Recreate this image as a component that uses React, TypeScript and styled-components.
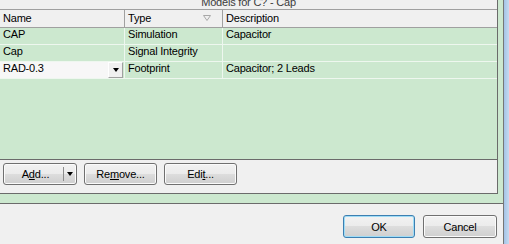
import React from 'react'
import styled, { createGlobalStyle } from 'styled-components'

const GlobalStyle = createGlobalStyle`
  html, body {
    margin: 0;
    padding: 0;
    background: #f0f0f0;
    overflow: hidden;
  }
  body {
    font-family: "Liberation Sans", Arial, sans-serif;
    font-size: 11px;
    letter-spacing: -0.2px;
    color: #000;
  }
`

const models = [
  { name: 'CAP', type: 'Simulation', desc: 'Capacitor' },
  { name: 'Cap', type: 'Signal Integrity', desc: '' },
  { name: 'RAD-0.3', type: 'Footprint', desc: 'Capacitor; 2 Leads', editing: true },
]

const Window = styled.div`
  display: flex;
  width: 509px;
  height: 244px;
`

const Dialog = styled.div`
  width: 503px;
  border-right: 1px solid #767676;
  display: flex;
  flex-direction: column;
`

const Frame = styled.div`
  flex: 1;
  background: linear-gradient(to right, #a4c3e6, #c6daf0);
`

const TopPanel = styled.div`
  height: 203px;
  background: #cce8cf;
  border-bottom: 1px solid #6b6b6b;
`

const Group = styled.div`
  width: 497px;
  height: 193px;
  background: #f0f0f0;
  border-right: 1px solid #6b6b6b;
  border-bottom: 1px solid #6b6b6b;
  display: flex;
  flex-direction: column;
`

const Title = styled.div`
  height: 9px;
  line-height: 5px;
  overflow: hidden;
  text-align: center;
  color: #3c3c3c;
  border-bottom: 1px solid #a0a0a0;
`

const Row = styled.div<{ $header?: boolean }>`
  display: flex;
  height: ${p => (p.$header ? 17 : 16)}px;
  line-height: ${p => (p.$header ? 17 : 13)}px;
  background: ${p => (p.$header ? '#f0f0f0' : '#cce8cf')};
  border-bottom: 1px solid ${p => (p.$header ? '#a0a0a0' : '#eef7ef')};
`

const Cell = styled.div<{ $w?: number; $header?: boolean }>`
  ${p => (p.$w ? `width: ${p.$w}px;` : 'flex: 1;')}
  display: flex;
  align-items: flex-start;
  padding-left: 3px;
  box-sizing: content-box;
  white-space: nowrap;
  overflow: hidden;
  border-right: ${p => (p.$w ? `1px solid ${p.$header ? '#a0a0a0' : '#eef7ef'}` : 'none')};
`

const SortMark = styled.svg`
  margin: 5px 11px 0 auto;
`

const Editor = styled.div`
  display: flex;
  width: 123px;
  height: 16px;
  margin-left: -3px;
`

const EditorText = styled.div`
  flex: 1;
  padding-left: 3px;
  background: #f7f7f7;
`

const DropBtn = styled.div`
  width: 13px;
  height: 14px;
  background: #f0f0f0;
  border-top: 1px solid #fff;
  border-left: 1px solid #fff;
  border-right: 1px solid #a0a0a0;
  border-bottom: 1px solid #a0a0a0;
  display: flex;
  align-items: center;
  justify-content: center;
`

const Arrow = styled.span`
  width: 0;
  height: 0;
  border-left: 3.5px solid transparent;
  border-right: 3.5px solid transparent;
  border-top: 4px solid #000;
`

const Empty = styled.div`
  flex: 1;
  background: #cce8cf;
`

const ButtonBar = styled.div`
  height: 30px;
  border-top: 1px solid #6b6b6b;
  display: flex;
  align-items: flex-start;
  gap: 7px;
  padding: 3px 0 0 3px;
`

const Btn = styled.button<{ $w: number; $h?: number; $primary?: boolean }>`
  width: ${p => p.$w}px;
  height: ${p => p.$h ?? 22}px;
  padding: 0;
  display: flex;
  align-items: center;
  justify-content: center;
  font: inherit;
  letter-spacing: inherit;
  color: #000;
  border: 1px solid ${p => (p.$primary ? '#3c7fb1' : '#707070')};
  border-radius: 3px;
  background: linear-gradient(#f2f2f2 0%, #ebebeb 50%, #dddddd 50%, #cfcfcf 100%);
  box-shadow: inset 0 0 0 1px ${p => (p.$primary ? '#9fdcf6' : '#fbfbfb')};
  u { text-decoration-thickness: 1px; text-underline-offset: 1px; }
`

const SplitLabel = styled.span`
  flex: 1;
  text-align: center;
  padding-left: 4px;
`

const SplitDivider = styled.span`
  width: 1px;
  height: 14px;
  background: #8c8c8c;
`

const SplitArrow = styled.span`
  width: 12px;
  display: flex;
  justify-content: center;
`

const Footer = styled.div`
  flex: 1;
  display: flex;
  justify-content: flex-end;
  align-items: flex-start;
  gap: 8px;
  padding: 11px 6px 0 0;
`

export default function App() {
  return (
    <Window>
      <GlobalStyle />
      <Dialog>
        <TopPanel>
          <Group>
            <Title>Models for C? - Cap</Title>
            <Row $header>
              <Cell $w={121} $header>Name</Cell>
              <Cell $w={94} $header>
                Type
                <SortMark width="8" height="6" viewBox="0 0 8 6">
                  <path d="M0.5 0.5 H7.5 L4 5.5 Z" fill="none" stroke="#a8a8a8" strokeWidth="1" />
                </SortMark>
              </Cell>
              <Cell $header>Description</Cell>
            </Row>
            {models.map(m => (
              <Row key={m.name}>
                <Cell $w={121}>
                  {m.editing ? (
                    <Editor>
                      <EditorText>{m.name}</EditorText>
                      <DropBtn><Arrow /></DropBtn>
                    </Editor>
                  ) : m.name}
                </Cell>
                <Cell $w={94}>{m.type}</Cell>
                <Cell>{m.desc}</Cell>
              </Row>
            ))}
            <Empty />
            <ButtonBar>
              <Btn $w={74}>
                <SplitLabel>A<u>d</u>d...</SplitLabel>
                <SplitDivider />
                <SplitArrow><Arrow /></SplitArrow>
              </Btn>
              <Btn $w={73}>Re<u>m</u>ove...</Btn>
              <Btn $w={73}>Edi<u>t</u>...</Btn>
            </ButtonBar>
          </Group>
        </TopPanel>
        <Footer>
          <Btn $w={72} $h={23} $primary>OK</Btn>
          <Btn $w={74} $h={23}>Cancel</Btn>
        </Footer>
      </Dialog>
      <Frame />
    </Window>
  )
}
